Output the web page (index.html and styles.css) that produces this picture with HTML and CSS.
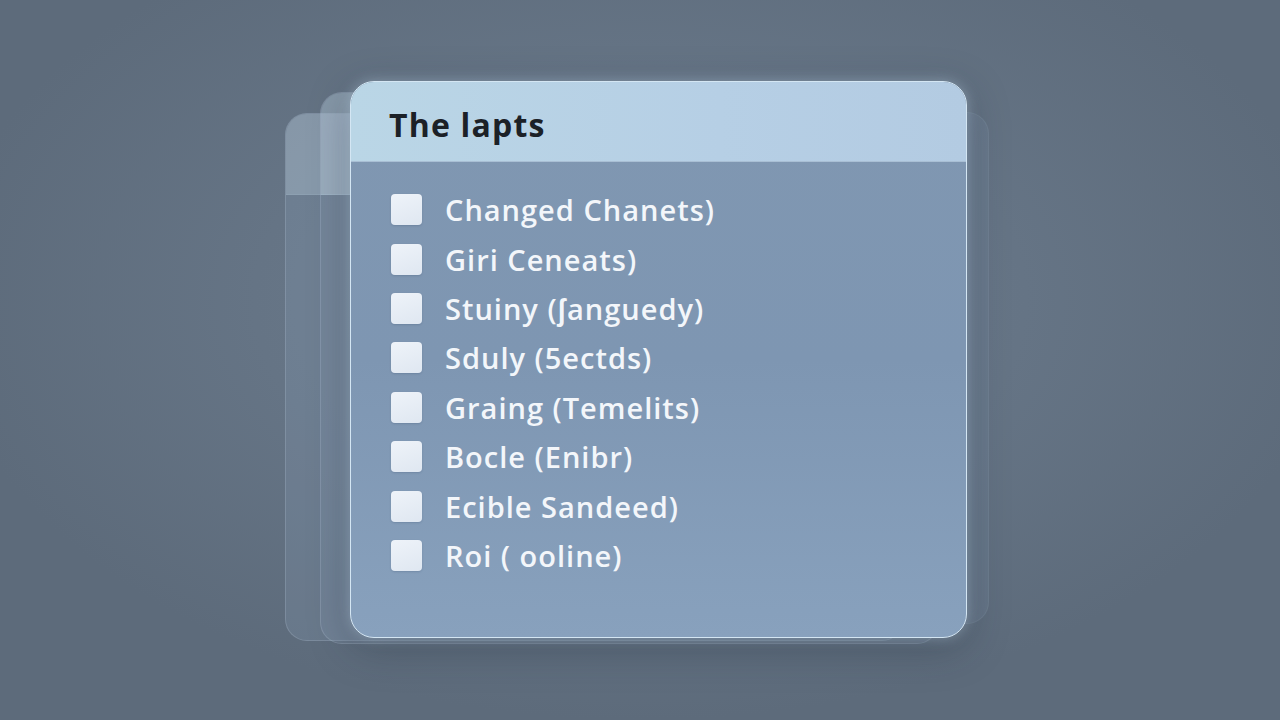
FILE: index.html
```html
<!DOCTYPE html>
<html>
<head>
<meta charset="utf-8">
<link rel="stylesheet" href="styles.css">
</head>
<body>
<div class="stage">
  <div class="ghost ghost-a"><div class="ghost-head"></div></div>
  <div class="ghost ghost-b"><div class="ghost-head ghost-head-tall"></div></div>
  <div class="ghost ghost-c"></div>
  <div class="card">
    <div class="card-head"><h1 class="title">The lapts</h1></div>
    <ul class="list">
      <li class="item"><span class="box"></span><span class="label">Changed Chanets)</span></li>
      <li class="item"><span class="box"></span><span class="label">Giri Ceneats)</span></li>
      <li class="item"><span class="box"></span><span class="label">Stuiny (ʃanguedy)</span></li>
      <li class="item"><span class="box"></span><span class="label">Sduly (5ectds)</span></li>
      <li class="item"><span class="box"></span><span class="label">Graing (Temelits)</span></li>
      <li class="item"><span class="box"></span><span class="label">Bocle (Enibr)</span></li>
      <li class="item"><span class="box"></span><span class="label">Ecible Sandeed)</span></li>
      <li class="item"><span class="box"></span><span class="label">Roi ( ooline)</span></li>
    </ul>
  </div>
</div>
</body>
</html>
```
FILE: styles.css
```css
html, body {
  margin: 0;
  padding: 0;
  width: 1280px;
  height: 720px;
  overflow: hidden;
}
body {
  background: radial-gradient(ellipse 700px 420px at 640px 300px, #6f7e8e 0%, #657485 55%, #5d6b7b 100%);
  font-family: "Open Sans", "Noto Sans", sans-serif;
}
.stage {
  position: relative;
  width: 1280px;
  height: 720px;
}
.ghost {
  position: absolute;
  border-radius: 22px;
  overflow: hidden;
  border: 1px solid rgba(200, 215, 230, 0.2);
}
.ghost-head {
  height: 80px;
  background: rgba(195, 214, 230, 0.3);
  border-bottom: 1px solid rgba(190, 210, 230, 0.12);
}
.ghost-head-tall {
  height: 101px;
}
.ghost-a {
  left: 285px;
  top: 113px;
  width: 617px;
  height: 526px;
  background: rgba(140, 160, 185, 0.24);
}
.ghost-b {
  left: 320px;
  top: 92px;
  width: 617px;
  height: 550px;
  background: rgba(140, 160, 185, 0.2);
}
.ghost-c {
  left: 380px;
  top: 112px;
  width: 607px;
  height: 510px;
  background: rgba(120, 140, 165, 0.25);
  border-color: rgba(200, 215, 230, 0.08);
}
.card {
  position: absolute;
  left: 350px;
  top: 81px;
  width: 615px;
  height: 555px;
  border-radius: 24px;
  border: 1.5px solid #d4e6f3;
  overflow: hidden;
  background: linear-gradient(180deg, #8097b1 0%, #7e96b2 50%, #88a1bd 100%);
  box-shadow: 0 0 14px rgba(200, 225, 245, 0.4), 0 10px 40px rgba(30, 40, 55, 0.35);
}
.card-head {
  height: 80px;
  background: linear-gradient(90deg, #bad6e6 0%, #b6cfe5 60%, #b3cbe2 100%);
  border-bottom: 1px solid #a9bfd4;
  display: flex;
  align-items: center;
  padding-left: 38px;
  box-sizing: border-box;
}
.title {
  margin: 0;
  font-family: "Open Sans", sans-serif;
  font-weight: 700;
  font-size: 32px;
  color: #1c2127;
  letter-spacing: 1.2px;
  padding-top: 5px;
}
.list {
  list-style: none;
  margin: 0;
  padding: 23px 0 0 40px;
  display: flex;
  flex-direction: column;
  gap: 0;
}
.item {
  height: 49.4px;
  display: flex;
  align-items: center;
}
.box {
  width: 31px;
  height: 31px;
  border-radius: 4px;
  background: linear-gradient(160deg, #eef3f9 0%, #dfe7f1 100%);
  box-shadow: 0 1px 2px rgba(40, 60, 90, 0.2);
  flex-shrink: 0;
}
.label {
  margin-left: 23px;
  font-size: 29px;
  font-weight: 600;
  color: #f3f6fa;
  letter-spacing: 1px;
}
```
